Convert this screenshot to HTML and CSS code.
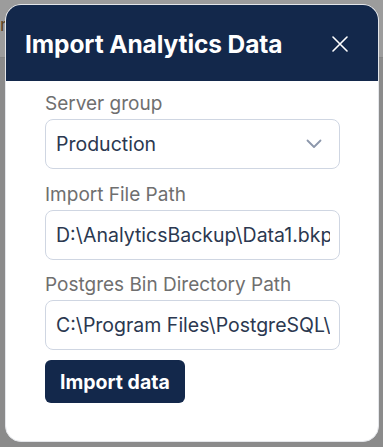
FILE: index.html
```html
<!DOCTYPE html>
<html lang="en">
<head>
    <meta charset="UTF-8">
    <meta name="viewport" content="width=device-width, initial-scale=1.0">
    <title>Import Analytics Data</title>
    <link rel="stylesheet" href="styles.css">
</head>
<body>
    <div class="page">
        <div class="topbar"><span class="topbar-text">m</span></div>
    </div>

    <div class="overlay">
        <div class="modal">
            <div class="modal-header">
                <h1>Import Analytics Data</h1>
                <button class="close-btn" aria-label="Close">
                    <svg width="16" height="16" viewBox="0 0 16 16" fill="none" stroke="white" stroke-width="1.6" stroke-linecap="round">
                        <path d="M1 1L15 15M15 1L1 15"/>
                    </svg>
                </button>
            </div>

            <div class="modal-body">
                <div class="field">
                    <label>Server group</label>
                    <div class="select">
                        <span>Production</span>
                        <svg width="16" height="10" viewBox="0 0 16 10" fill="none" stroke="#8c97ab" stroke-width="1.8" stroke-linecap="round" stroke-linejoin="round">
                            <path d="M1.5 1.5L8 8L14.5 1.5"/>
                        </svg>
                    </div>
                </div>

                <div class="field">
                    <label>Import File Path</label>
                    <input type="text" value="D:\AnalyticsBackup\Data1.bkp">
                </div>

                <div class="field">
                    <label>Postgres Bin Directory Path</label>
                    <input type="text" value="C:\Program Files\PostgreSQL\9.6\bin">
                </div>

                <button class="primary-btn">Import data</button>
            </div>
        </div>
    </div>
</body>
</html>
```

FILE: styles.css
```css
:root {
    --navy: #13284b;
    --label: #6f6f6f;
    --text: #2b3850;
    --border: #cfd6e2;
}

* {
    margin: 0;
    padding: 0;
    box-sizing: border-box;
    font-family: Inter, "Noto Sans", sans-serif;
}

body {
    background: #8b8b8b;
    width: 383px;
    height: 447px;
    overflow: hidden;
    position: relative;
}

.topbar {
    height: 58px;
    background: #9c9c9c;
    border-bottom: 1px solid #858585;
    padding-top: 14px;
}

.topbar-text {
    display: inline-block;
    color: #5c4422;
    font-size: 18px;
}

.overlay {
    position: absolute;
    inset: 0;
}

.modal {
    position: absolute;
    top: 4px;
    left: 5px;
    width: 374px;
    height: 438px;
    background: white;
    border-radius: 16px;
    overflow: hidden;
    border: 1px solid #e4e6ea;
}

.modal-header {
    background: var(--navy);
    height: 76px;
    display: flex;
    align-items: center;
    justify-content: space-between;
    padding: 2px 30px 0 19px;
}

.modal-header h1 {
    color: white;
    font-size: 24.5px;
    font-weight: 700;
    letter-spacing: -0.1px;
}

.close-btn {
    background: none;
    border: none;
    display: flex;
    cursor: pointer;
}

.modal-body {
    padding: 11px 38px 40px 39px;
}

.field {
    margin-bottom: 13.5px;
}

.field label {
    display: block;
    color: var(--label);
    font-size: 19px;
    line-height: 24px;
    margin-bottom: 3px;
}

.select,
.field input {
    width: 100%;
    height: 50px;
    border: 1px solid var(--border);
    border-radius: 8px;
    padding: 0 17px 0 10px;
    font-size: 19.5px;
    color: var(--text);
    background: white;
}

.select {
    display: flex;
    align-items: center;
    justify-content: space-between;
}

.field input {
    padding-right: 9px;
    outline: none;
}

.primary-btn {
    background: var(--navy);
    color: white;
    border: none;
    border-radius: 6px;
    height: 43px;
    padding: 0 15px;
    font-size: 19.5px;
    font-weight: 700;
    margin-top: -3.5px;
    cursor: pointer;
}
```
